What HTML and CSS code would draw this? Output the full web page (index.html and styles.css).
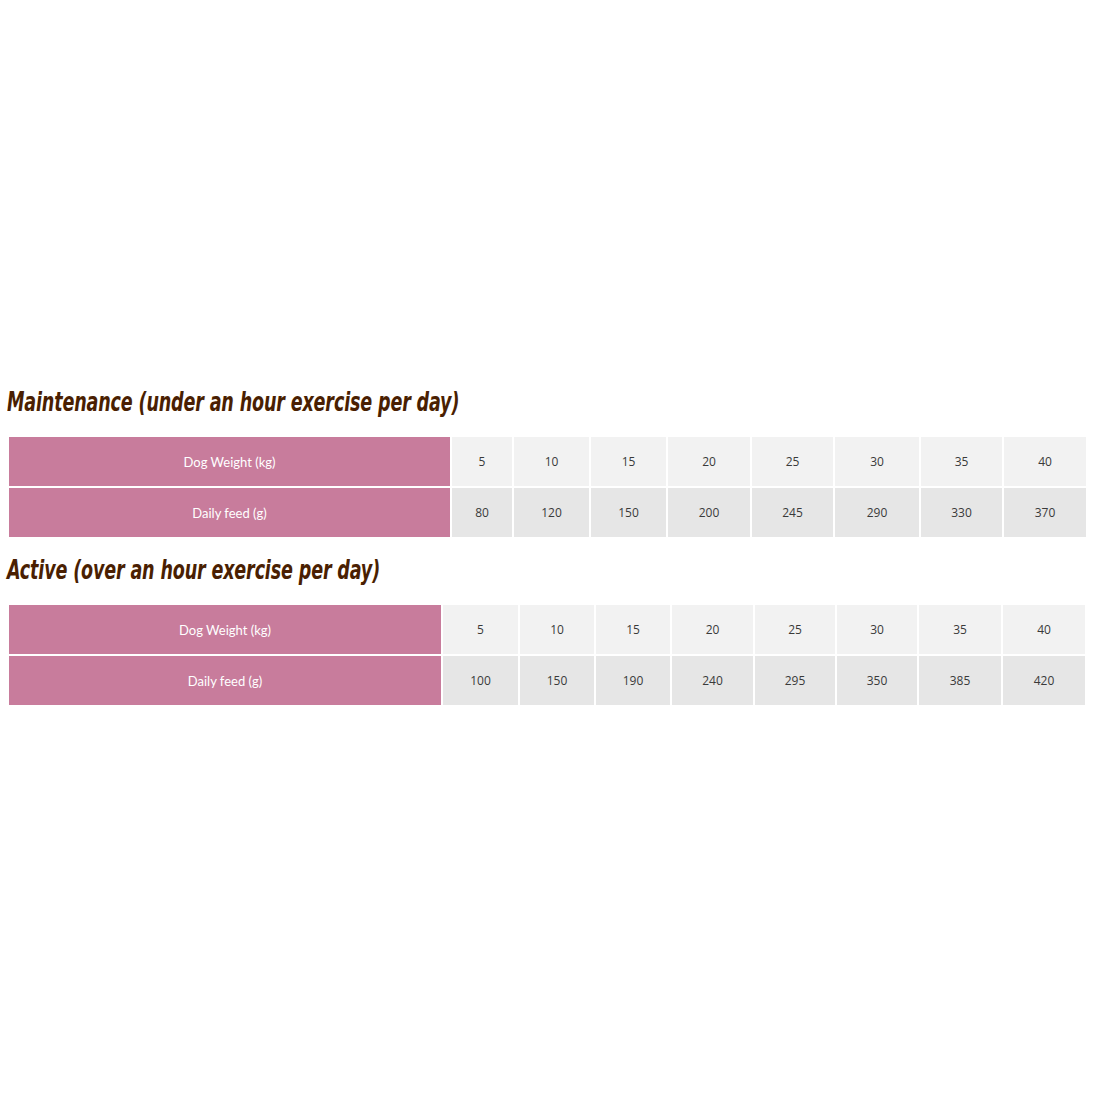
FILE: index.html
```html
<!DOCTYPE html>
<html>
<head>
<meta charset="utf-8">
<link rel="stylesheet" href="styles.css">
</head>
<body>
<div class="page">
  <section class="block block-maint">
    <h2 class="title">Maintenance (under an hour exercise per day)</h2>
    <div class="grid grid-maint">
      <div class="head">Dog Weight (kg)</div>
      <div class="cell light">5</div>
      <div class="cell light">10</div>
      <div class="cell light">15</div>
      <div class="cell light">20</div>
      <div class="cell light">25</div>
      <div class="cell light">30</div>
      <div class="cell light">35</div>
      <div class="cell light">40</div>
      <div class="head">Daily feed (g)</div>
      <div class="cell dark">80</div>
      <div class="cell dark">120</div>
      <div class="cell dark">150</div>
      <div class="cell dark">200</div>
      <div class="cell dark">245</div>
      <div class="cell dark">290</div>
      <div class="cell dark">330</div>
      <div class="cell dark">370</div>
    </div>
  </section>
  <section class="block block-active">
    <h2 class="title">Active (over an hour exercise per day)</h2>
    <div class="grid grid-active">
      <div class="head">Dog Weight (kg)</div>
      <div class="cell light">5</div>
      <div class="cell light">10</div>
      <div class="cell light">15</div>
      <div class="cell light">20</div>
      <div class="cell light">25</div>
      <div class="cell light">30</div>
      <div class="cell light">35</div>
      <div class="cell light">40</div>
      <div class="head">Daily feed (g)</div>
      <div class="cell dark">100</div>
      <div class="cell dark">150</div>
      <div class="cell dark">190</div>
      <div class="cell dark">240</div>
      <div class="cell dark">295</div>
      <div class="cell dark">350</div>
      <div class="cell dark">385</div>
      <div class="cell dark">420</div>
    </div>
  </section>
</div>
</body>
</html>
```
FILE: styles.css
```css
html, body {
  margin: 0;
  padding: 0;
  background: #ffffff;
}
.page {
  padding: 383px 13px 0 9px;
}
.title {
  margin: 0 0 0 -2px;
  font-family: "DejaVu Sans Condensed", "DejaVu Sans", sans-serif;
  font-weight: bold;
  font-style: italic;
  font-size: 26px;
  line-height: 38px;
  color: #4a1f02;
  letter-spacing: -0.2px;
  white-space: nowrap;
  transform: scaleX(0.75);
  transform-origin: left center;
}
.block-maint .title {
  margin-bottom: 16px;
}
.block-active {
  margin-top: 14px;
}
.block-active .title {
  margin-bottom: 16px;
}
.grid {
  display: grid;
  gap: 2px;
  grid-auto-rows: 49px;
}
.grid-maint {
  grid-template-columns: 441px 60px 75px 75px 82px 81px 84px 81px 82px;
}
.grid-active {
  grid-template-columns: 432px 75px 74px 74px 81px 80px 80px 82px 82px;
}
.head {
  background: #c87c9c;
  color: #ffffff;
  font-family: Lato, "Open Sans", sans-serif;
  font-size: 13px;
  display: flex;
  align-items: center;
  justify-content: center;
}
.cell {
  font-family: "Open Sans", "DejaVu Sans", sans-serif;
  font-size: 12px;
  color: #3a3a3a;
  display: flex;
  align-items: center;
  justify-content: center;
}
.light {
  background: #f2f2f2;
}
.dark {
  background: #e6e6e6;
}
```
